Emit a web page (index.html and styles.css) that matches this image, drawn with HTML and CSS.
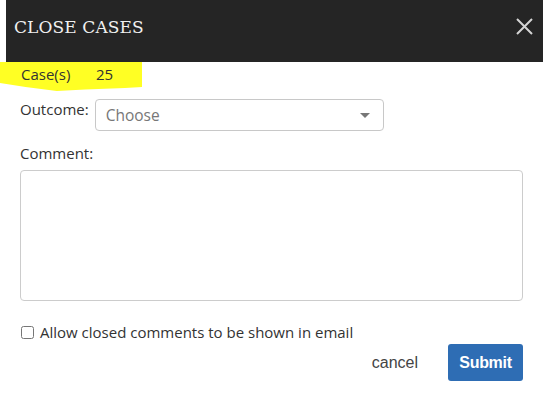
FILE: index.html
```html
<!DOCTYPE html>
<html lang="en">
<head>
    <meta charset="UTF-8">
    <meta name="viewport" content="width=device-width, initial-scale=1.0">
    <title>Close Cases</title>
    <link rel="stylesheet" href="styles.css">
</head>
<body>
    <div class="modal">
        <div class="modal-header">
            <h2>CLOSE CASES</h2>
            <button class="close" aria-label="Close">
                <svg width="17" height="17" viewBox="0 0 17 17">
                    <path d="M1 1 L16 16 M16 1 L1 16" stroke="#d4d4d4" stroke-width="2" fill="none"/>
                </svg>
            </button>
        </div>

        <div class="cases">
            <span class="cases-label">Case(s)</span>
            <span class="cases-count">25</span>
        </div>

        <div class="modal-body">
            <div class="field-row">
                <label class="field-label">Outcome:</label>
                <div class="select">
                    <span class="placeholder">Choose</span>
                    <span class="arrow"></span>
                </div>
            </div>

            <label class="field-label comment-label">Comment:</label>
            <textarea class="comment"></textarea>

            <label class="check-row">
                <input type="checkbox">
                <span>Allow closed comments to be shown in email</span>
            </label>

            <div class="actions">
                <a class="cancel" href="#">cancel</a>
                <button class="submit">Submit</button>
            </div>
        </div>
    </div>
</body>
</html>
```

FILE: styles.css
```css
body {
    margin: 0;
    background-color: #ffffff;
    font-family: "Open Sans", "Noto Sans", sans-serif;
    font-size: 15px;
    color: #333;
}

.modal {
    width: 543px;
    height: 395px;
    overflow: hidden;
}

.modal-header {
    margin-left: 6px;
    height: 62px;
    background-color: #252525;
    display: flex;
    align-items: flex-start;
    justify-content: space-between;
    box-sizing: border-box;
    padding: 16px 10px 0 8px;
}

.modal-header h2 {
    margin: 0;
    font-family: "DejaVu Serif", serif;
    font-weight: normal;
    font-size: 17px;
    letter-spacing: 0.1px;
    line-height: 22px;
    color: #f0f0f0;
}

.close {
    background: none;
    border: none;
    padding: 0;
    margin-top: 2px;
    cursor: pointer;
    line-height: 0;
}

.cases {
    width: 142px;
    height: 29px;
    background-color: #ffff24;
    display: flex;
    align-items: flex-start;
    padding-left: 21px;
    box-sizing: border-box;
    line-height: 25px;
    clip-path: polygon(0 0, 100% 0, 100% 86%, 88% 90%, 60% 95%, 40% 100%, 18% 86%, 0 72%);
}

.cases-label {
    width: 75px;
}

.modal-body {
    padding: 8px 20px 0 20px;
}

.field-row {
    display: flex;
    align-items: flex-start;
    gap: 6px;
}

.field-label {
    display: block;
    line-height: 20px;
    color: #333;
}

.select {
    width: 289px;
    height: 32px;
    box-sizing: border-box;
    border: 1px solid #c8c8c8;
    border-radius: 4px;
    display: flex;
    align-items: center;
    justify-content: space-between;
    padding: 0 13px 0 10px;
    font-size: 15.5px;
}

.placeholder {
    color: #777;
}

.arrow {
    width: 0;
    height: 0;
    border-left: 5px solid transparent;
    border-right: 5px solid transparent;
    border-top: 5px solid #777;
}

.comment-label {
    margin-top: 12px;
}

.comment {
    display: block;
    width: 503px;
    height: 131px;
    box-sizing: border-box;
    margin-top: 7px;
    border: 1px solid #cccccc;
    border-radius: 4px;
    resize: none;
    outline: none;
}

.check-row {
    display: flex;
    align-items: center;
    margin-top: 21px;
    line-height: 20px;
}

.check-row input {
    width: 13px;
    height: 13px;
    margin: 0 6px 0 1px;
}

.actions {
    display: flex;
    justify-content: flex-end;
    align-items: center;
    gap: 30px;
    margin-top: 2px;
}

.cancel {
    font-family: "Liberation Sans", Arial, sans-serif;
    font-size: 16px;
    color: #444;
    text-decoration: none;
}

.submit {
    width: 75px;
    height: 37px;
    background-color: #2e6db4;
    color: #ffffff;
    border: none;
    border-radius: 3px;
    font-family: "Liberation Sans", Arial, sans-serif;
    font-weight: bold;
    font-size: 16px;
    letter-spacing: -0.3px;
    cursor: pointer;
}
```
